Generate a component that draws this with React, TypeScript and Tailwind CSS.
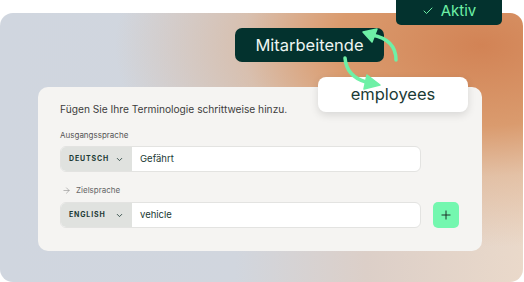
import { Check, ChevronDown, ArrowRight, Plus } from "lucide-react";

function LangRow({ lang, value }: { lang: string; value: string }) {
  return (
    <div className="flex h-[26px] w-[361px] overflow-hidden rounded-[6px] border border-[#e3e3e1] bg-white">
      <div className="flex w-[71px] shrink-0 items-center bg-[#e0e2df] pl-[8px]">
        <span className="text-[7px] font-bold tracking-[0.12em] text-[#1d3a35]">{lang}</span>
        <ChevronDown className="ml-auto mr-[8px] h-[9px] w-[9px] text-[#1d3a35]" strokeWidth={2.2} />
      </div>
      <div className="flex items-center pl-[8px] text-[9.5px] text-[#1b3a35]">{value}</div>
    </div>
  );
}

export default function App() {
  return (
    <div
      className="relative h-[282px] w-[524px] overflow-hidden bg-white"
      style={{ fontFamily: "Inter, 'Noto Sans', sans-serif" }}
    >
      {/* gradient panel */}
      <div className="mt-[13px] h-[269px] w-[523px] rounded-[13px] bg-[radial-gradient(ellipse_70%_75%_at_92%_12%,#d28355_0%,#da9b6e_40%,rgba(222,170,130,0.5)_65%,transparent_100%),linear-gradient(90deg,#d0d6df_0%,#d1d6de_45%,#dccfc8_70%,#ead9ca_100%)] pl-[38px] pt-[74px]">
        {/* card */}
        <div className="w-[444px] rounded-[10px] bg-[#f5f4f2] pb-[23px] pl-[22px] pt-[15px]">
          <p className="text-[10.2px] leading-[14px] text-[#3d3d3d]">
            Fügen Sie Ihre Terminologie schrittweise hinzu.
          </p>
          <p className="mt-[14px] text-[8px] leading-[10px] text-[#555]">Ausgangssprache</p>
          <div className="mt-[6px]">
            <LangRow lang="DEUTSCH" value="Gefährt" />
          </div>
          <div className="mt-[13px] flex items-center gap-[5px] text-[8px] leading-[10px] text-[#666]">
            <ArrowRight className="ml-[2px] h-[9px] w-[9px] text-[#888]" strokeWidth={1.5} />
            <span>Zielsprache</span>
          </div>
          <div className="mt-[7px] flex items-center gap-[12px]">
            <LangRow lang="ENGLISH" value="vehicle" />
            <button className="flex h-[26px] w-[26px] items-center justify-center rounded-[5px] bg-[#74f7af] text-[#15241f]">
              <Plus className="h-[14px] w-[14px]" strokeWidth={1.6} />
            </button>
          </div>
        </div>
      </div>

      {/* Aktiv badge */}
      <div className="absolute left-[396px] top-[-6px] flex h-[31px] w-[106px] items-end justify-center gap-[7px] rounded-[5px] bg-[#03322e] pb-[4px] text-[15px] leading-[20px] text-[#6ef0a6]">
        <Check className="mb-[4px] h-[12px] w-[12px]" strokeWidth={2} />
        <span>Aktiv</span>
      </div>

      {/* Mitarbeitende tag */}
      <div className="absolute left-[235px] top-[28px] flex h-[34px] w-[149px] items-center justify-center rounded-[7px] bg-[#03322e] text-[16.5px] text-[#eef5f2]">
        Mitarbeitende
      </div>

      {/* employees tag */}
      <div className="absolute left-[318px] top-[77px] flex h-[35px] w-[150px] items-center justify-center rounded-[8px] bg-white text-[16.5px] text-[#1b3b36] shadow-[0_3px_8px_rgba(0,0,0,0.12)]">
        employees
      </div>

      {/* arrows */}
      <svg className="absolute left-0 top-0" width="524" height="282" fill="none">
        <g stroke="#6ef0a6" strokeWidth="3.5" strokeLinecap="round">
          <path d="M396 60 C396 47 388 38 372 35" />
          <path d="M345 58 C346 70 352 78 366 82" />
        </g>
        <g fill="#6ef0a6" stroke="#6ef0a6" strokeWidth="1.5" strokeLinejoin="round">
          <polygon points="363,32 377,29 372,42" />
          <polygon points="367,75 380,85 364,89" />
        </g>
      </svg>
    </div>
  );
}
